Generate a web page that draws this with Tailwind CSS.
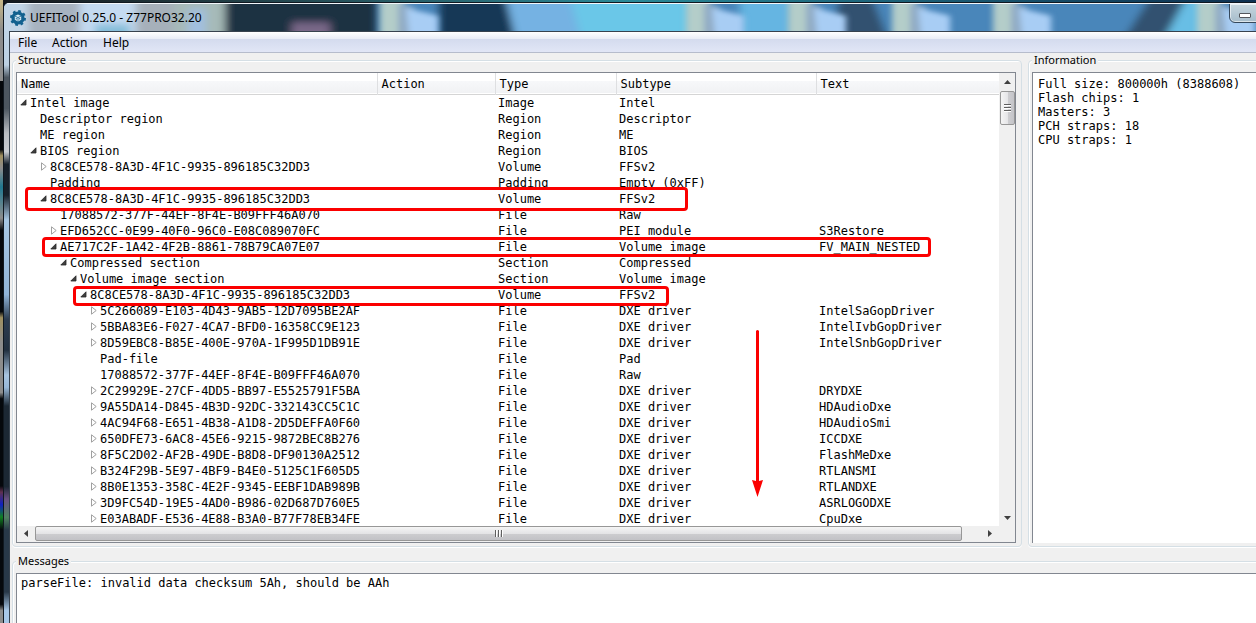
<!DOCTYPE html>
<html lang="en">
<head>
<meta charset="utf-8">
<title>UEFITool 0.25.0 - Z77PRO32.20</title>
<script src="https://cdn.jsdelivr.net/npm/@tailwindcss/browser@4"></script>
</head>
<body class="relative h-screen overflow-hidden bg-[#0c1016] pl-[3px] pt-[2px] font-['Noto_Sans','Open_Sans',sans-serif] text-xs text-black">

<!-- desktop behind the window -->
<div class="absolute inset-x-0 top-0 h-[3px] bg-linear-to-r from-[#15181c] via-[#2a8a98] to-[#0e3050]" aria-hidden="true"></div>
<div class="absolute inset-y-0 left-0 w-[3px] bg-[linear-gradient(180deg,#c8b888_0%,#8c8c8c_5%,#8c8c8c_13%,#05080c_13%,#05080c_24%,#a09060_25%,#8c8c8c_27%,#207890_30%,#8c8c8c_35%,#05080c_37%,#05080c_50%,#a09060_51%,#8c8c8c_55%,#8c8c8c_63%,#05080c_64%,#05080c_78%,#603050_79%,#1020c0_81%,#108020_83%,#05080c_85%,#05080c_97%,#8c8c8c_98%)]" aria-hidden="true"></div>

<div class="relative flex h-full flex-col overflow-hidden rounded-tl-md border-l border-t border-[#101820] bg-[linear-gradient(180deg,#c4d8ea_0%,#bcd0e2_10%,#4c5660_12%,#4c5660_17%,#b8bcc2_21%,#c8ccd2_24%,#16202a_26%,#16202a_31%,#a8c8e4_35%,#90b4d8_47%,#2c3c50_51%,#223040_56%,#a8c4e0_60%,#98b8d8_62%,#1c2834_65%,#1c2834_78%,#685080_80%,#508060_83%,#283848_85%,#283848_95%,#a8c8e8_98%)]">

  <header class="relative flex h-7 shrink-0 items-center overflow-hidden border-t border-white/80">
    <svg class="absolute inset-0 h-full w-full" viewBox="4 3 1252 28" preserveAspectRatio="none" aria-hidden="true">
      <defs>
        <filter id="soft" x="-5%" y="-50%" width="110%" height="200%"><feGaussianBlur stdDeviation="4"/></filter>
        <filter id="softer" x="-20%" y="-50%" width="140%" height="200%"><feGaussianBlur stdDeviation="3"/></filter>
        <g id="folder">
          <path d="M0 -8H24V44H0z" fill="#b4cdc9"/>
          <path d="M18 2L34 6V44H18z" fill="#90aac4"/>
          <path d="M26 7L58 15V44H30z" fill="#a8cdf4"/>
        </g>
      </defs>
      <g filter="url(#soft)">
        <path d="M-20 -10H1280V50H-20z" fill="#4a86ba"/>
        <path d="M-20 -10H30V50H-20z" fill="#c2d5e7"/>
        <path d="M28 -10H84V50H28z" fill="#a7b3c0"/>
        <path d="M80 -10H140V50H80z" fill="#c4daf1"/>
        <path d="M95 24H130V40H95z" fill="#84bdd9"/>
        <path d="M136 -10H178V50H136z" fill="#a6b0ba"/>
        <path d="M174 -10H226V50H174z" fill="#a6bab8"/>
        <path d="M188 8H206V40H188z" fill="#a1bfdf"/>
        <path d="M225 -10H378V50H225z" fill="#1d3043"/>
        <path d="M292 22H330V45H292z" fill="#796788"/>
        <path d="M438 -10H505L519 50H438z" fill="#193856"/>
        <path d="M504 -10H568L584 50H518z" fill="#75b2e3"/>
        <path d="M568 -10H692V50H584z" fill="#6ac7e8"/>
        <path d="M740 -10H792V50H740z" fill="#65b5e2"/>
        <path d="M840 -10H870L892 50H830z" fill="#31516f"/>
        <path d="M1154 -10H1200L1163 50H1117z" fill="#31516f"/>
        <path d="M1190 -10H1208V50H1158z" fill="#68bee5"/>
      </g>
      <g filter="url(#softer)">
        <use href="#folder" x="380"/><use href="#folder" x="686"/><use href="#folder" x="788"/>
        <use href="#folder" x="892"/><use href="#folder" x="993"/><use href="#folder" x="1197"/>
      </g>
    </svg>
    <svg class="relative ml-1.5 size-4 shrink-0" viewBox="0 0 16 16" aria-hidden="true">
      <circle cx="8" cy="8" r="6.600" fill="#12618f"/>
      <circle cx="8" cy="8" r="7" fill="none" stroke="#12618f" stroke-width="2" stroke-dasharray="2.75 2.75"/>
      <path d="M8 4.400L11.200 6V9.800L8 11.600L4.800 9.800V6z" fill="#d9ebf5"/>
      <path d="M4.800 6L8 7.600L11.200 6M8 7.600V11.600" fill="none" stroke="#12618f" stroke-width=".8"/>
      <path d="M6.300 8V9.400M9.700 8V9.400" stroke="#12618f" stroke-width=".9"/>
    </svg>
    <h1 class="relative ml-1 whitespace-nowrap">UEFITool 0.25.0 - Z77PRO32.20</h1>
    <button class="absolute -right-1 -top-px flex h-5 w-[31px] items-center justify-center rounded-bl-md border border-[#35485c] bg-linear-to-b from-[#c9d8df] to-[#a6bccb] pt-1 shadow-[inset_0_0_0_1px_rgba(255,255,255,0.6)]" aria-label="Minimize">
      <span class="h-[5px] w-3 rounded-[1px] border border-[#53565c] bg-white"></span>
    </button>
  </header>

  <div class="ml-[5px] flex min-h-0 flex-1 flex-col border-l border-t border-[#37424e] bg-[#f0f0f0]">
    <nav class="flex h-[21px] shrink-0 items-center border-b border-[#b6bccc] bg-[linear-gradient(180deg,#ffffff_0%,#e8ecf6_35%,#d4dbee_36%,#e1e6f6_100%)] pl-2 pt-0.5">
      <button class="w-[34px] text-left">File</button>
      <button class="w-[51px] text-left">Action</button>
      <button class="text-left">Help</button>
    </nav>

    <div class="flex min-h-0 flex-1 gap-[6px] pl-0.5">
      <section class="relative flex min-w-0 flex-1 flex-col pr-[6px] pl-1 pb-1" aria-labelledby="structure">
        <div class="absolute inset-x-0 top-[7px] bottom-0 rounded border border-[#d5dfe5] shadow-[inset_1px_1px_0_white,0_1px_0_white]"></div>
        <h2 id="structure" class="relative h-[19px] w-fit bg-[#f0f0f0] px-0.5 text-[11px] leading-[14px]">Structure</h2>

        <div class="relative flex min-h-0 flex-1 flex-col border border-[#828790] bg-white">
          <div class="flex min-h-0 flex-1">
            <div class="min-w-0 flex-1 overflow-hidden">
              <table class="w-full table-fixed border-collapse whitespace-pre text-left font-['DejaVu_Sans_Mono',monospace] text-xs leading-4">
                <thead>
                  <tr class="h-[21px] border-b border-[#d5d5d5] bg-[linear-gradient(180deg,#ffffff_0%,#ffffff_40%,#f7f8fa_41%,#f1f2f4_100%)]">
                    <th class="w-[360px] border-r border-[#dedfe1] px-1 pt-0.5 pb-0 font-normal">Name</th>
                    <th class="w-[118px] border-r border-[#dedfe1] px-1 pt-0.5 pb-0 font-normal">Action</th>
                    <th class="w-[121px] border-r border-[#dedfe1] px-1 pt-0.5 pb-0 font-normal">Type</th>
                    <th class="w-[200px] border-r border-[#dedfe1] px-1 pt-0.5 pb-0 font-normal">Subtype</th>
                    <th class="px-1 pt-0.5 pb-0 font-normal">Text</th>
                  </tr>
                </thead>
                <tbody id="tree"></tbody>
              </table>
            </div>
            <div class="flex w-4 shrink-0 flex-col items-center bg-[#f0f0f0]">
              <button class="flex h-[18px] w-full items-center justify-center" aria-label="Scroll up"><svg class="h-1 w-[7px]" viewBox="0 0 7 4"><path d="M0 4L3.5 0L7 4z" fill="#404040"/></svg></button>
              <div class="flex h-[34px] w-[15px] flex-col items-center justify-center gap-px rounded-[2px] border border-[#979797] bg-[linear-gradient(90deg,#f5f5f5,#e6e6e8_50%,#cfcfd2_51%,#c4c4c8)]">
                <span class="h-0.5 w-[7px] border-b border-white bg-[#606060]"></span><span class="h-0.5 w-[7px] border-b border-white bg-[#606060]"></span><span class="h-0.5 w-[7px] border-b border-white bg-[#606060]"></span>
              </div>
              <button class="mt-auto flex h-[17px] w-full items-center justify-center" aria-label="Scroll down"><svg class="h-1 w-[7px]" viewBox="0 0 7 4"><path d="M0 0H7L3.5 4z" fill="#404040"/></svg></button>
            </div>
          </div>
          <div class="flex h-4 shrink-0 items-start bg-[#f0f0f0]">
            <button class="flex h-[15px] w-[18px] items-center justify-center" aria-label="Scroll left"><svg class="h-[7px] w-1" viewBox="0 0 4 7"><path d="M4 0V7L0 3.5z" fill="#404040"/></svg></button>
            <div class="flex h-[15px] flex-1 items-center justify-center gap-px rounded-[2px] border border-[#979797] bg-[linear-gradient(180deg,#f5f5f5,#e4e4e6_50%,#cdcdd0_51%,#c2c2c6)]">
              <span class="h-[7px] w-0.5 border-r border-white bg-[#606060]"></span><span class="h-[7px] w-0.5 border-r border-white bg-[#606060]"></span><span class="h-[7px] w-0.5 border-r border-white bg-[#606060]"></span>
            </div>
            <button class="ml-[19px] flex h-[15px] w-[17px] items-center justify-center" aria-label="Scroll right"><svg class="h-[7px] w-1" viewBox="0 0 4 7"><path d="M0 0V7L4 3.5z" fill="#404040"/></svg></button>
            <span class="w-[17px]"></span>
          </div>

          <!-- markup drawn over the tree -->
          <div class="absolute left-2 top-[114px] h-6 w-[663px] rounded border-3 border-[#fb0000]"></div>
          <div class="absolute left-[25px] top-[164px] h-5 w-[889px] rounded border-3 border-[#fb0000]"></div>
          <div class="absolute left-14 top-[213px] h-5 w-[596px] rounded border-3 border-[#fb0000]"></div>
          <svg class="absolute left-[735px] top-[257px] h-[167px] w-[11px]" viewBox="0 0 11 167" aria-hidden="true">
            <path d="M4 1Q5.500 -1 7 1V151L11 150L5.500 167L0 150L4 151z" fill="#fb0000"/>
          </svg>
        </div>
      </section>

      <section class="relative flex w-[228px] shrink-0 flex-col pb-1 pl-1" aria-labelledby="information">
        <div class="absolute -right-2 left-0 top-[7px] bottom-0 rounded border border-[#d5dfe5] shadow-[inset_1px_1px_0_white,0_1px_0_white]"></div>
        <h2 id="information" class="relative h-[19px] w-fit bg-[#f0f0f0] px-0.5 text-[11px] leading-[14px]">Information</h2>
        <div class="relative flex-1 whitespace-pre border-l border-t border-[#828790] bg-white py-1 pl-[5px] font-['DejaVu_Sans_Mono',monospace] text-xs leading-[14px]"><p>Full size: 800000h (8388608)</p><p>Flash chips: 1</p><p>Masters: 3</p><p>PCH straps: 18</p><p>CPU straps: 1</p></div>
      </section>
    </div>

    <section class="relative mt-[6px] flex h-[70px] shrink-0 flex-col pl-[6px]" aria-labelledby="messages">
      <div class="absolute -right-2 -bottom-2 left-0.5 top-[8px] rounded border border-[#d5dfe5] shadow-[inset_1px_1px_0_white]"></div>
      <h2 id="messages" class="relative h-5 w-fit bg-[#f0f0f0] px-0.5 text-[11px] leading-4">Messages</h2>
      <div class="relative flex-1 border-l border-t border-[#828790] bg-white px-1 pt-0.5 font-['DejaVu_Sans_Mono',monospace] text-xs leading-[14px]">parseFile: invalid data checksum 5Ah, should be AAh</div>
    </section>
  </div>
</div>

<script>
// [depth, state (o = open, c = closed, blank = leaf), name, type, subtype, text]
const rows = [
  [0, 'o', 'Intel image', 'Image', 'Intel', ''],
  [1, '', 'Descriptor region', 'Region', 'Descriptor', ''],
  [1, '', 'ME region', 'Region', 'ME', ''],
  [1, 'o', 'BIOS region', 'Region', 'BIOS', ''],
  [2, 'c', '8C8CE578-8A3D-4F1C-9935-896185C32DD3', 'Volume', 'FFSv2', ''],
  [2, '', 'Padding', 'Padding', 'Empty (0xFF)', ''],
  [2, 'o', '8C8CE578-8A3D-4F1C-9935-896185C32DD3', 'Volume', 'FFSv2', ''],
  [3, '', '17088572-377F-44EF-8F4E-B09FFF46A070', 'File', 'Raw', ''],
  [3, 'c', 'EFD652CC-0E99-40F0-96C0-E08C089070FC', 'File', 'PEI module', 'S3Restore'],
  [3, 'o', 'AE717C2F-1A42-4F2B-8861-78B79CA07E07', 'File', 'Volume image', 'FV_MAIN_NESTED'],
  [4, 'o', 'Compressed section', 'Section', 'Compressed', ''],
  [5, 'o', 'Volume image section', 'Section', 'Volume image', ''],
  [6, 'o', '8C8CE578-8A3D-4F1C-9935-896185C32DD3', 'Volume', 'FFSv2', ''],
  [7, 'c', '5C266089-E103-4D43-9AB5-12D7095BE2AF', 'File', 'DXE driver', 'IntelSaGopDriver'],
  [7, 'c', '5BBA83E6-F027-4CA7-BFD0-16358CC9E123', 'File', 'DXE driver', 'IntelIvbGopDriver'],
  [7, 'c', '8D59EBC8-B85E-400E-970A-1F995D1DB91E', 'File', 'DXE driver', 'IntelSnbGopDriver'],
  [7, '', 'Pad-file', 'File', 'Pad', ''],
  [7, '', '17088572-377F-44EF-8F4E-B09FFF46A070', 'File', 'Raw', ''],
  [7, 'c', '2C29929E-27CF-4DD5-BB97-E5525791F5BA', 'File', 'DXE driver', 'DRYDXE'],
  [7, 'c', '9A55DA14-D845-4B3D-92DC-332143CC5C1C', 'File', 'DXE driver', 'HDAudioDxe'],
  [7, 'c', '4AC94F68-E651-4B38-A1D8-2D5DEFFA0F60', 'File', 'DXE driver', 'HDAudioSmi'],
  [7, 'c', '650DFE73-6AC8-45E6-9215-9872BEC8B276', 'File', 'DXE driver', 'ICCDXE'],
  [7, 'c', '8F5C2D02-AF2B-49DE-B8D8-DF90130A2512', 'File', 'DXE driver', 'FlashMeDxe'],
  [7, 'c', 'B324F29B-5E97-4BF9-B4E0-5125C1F605D5', 'File', 'DXE driver', 'RTLANSMI'],
  [7, 'c', '8B0E1353-358C-4E2F-9345-EEBF1DAB989B', 'File', 'DXE driver', 'RTLANDXE'],
  [7, 'c', '3D9FC54D-19E5-4AD0-B986-02D687D760E5', 'File', 'DXE driver', 'ASRLOGODXE'],
  [7, 'c', 'E03ABADF-E536-4E88-B3A0-B77F78EB34FE', 'File', 'DXE driver', 'CpuDxe']
];
const marks = {
  o: '<svg class="size-[7px]" viewBox="0 0 7 7"><path d="M6 .8V6H.8z" fill="#404040" stroke="#262626" stroke-width=".8"/></svg>',
  c: '<svg class="ml-px h-[9px] w-[6px]" viewBox="0 0 6 9"><path d="M.5 .8V8.200L5.200 4.500z" fill="#fff" stroke="#a0a0a0"/></svg>',
  '': ''
};
document.getElementById('tree').innerHTML = rows.map(([d, s, name, type, sub, text]) =>
  `<tr class="h-4"><td class="p-0"><div class="flex items-center" style="padding-left:${3 + 10 * d}px"><span class="flex w-[10px] shrink-0 items-center">${marks[s]}</span>${name}</div></td><td class="p-0"></td><td class="p-0 pl-[3px]">${type}</td><td class="p-0 pl-[3px]">${sub}</td><td class="p-0 pl-[3px]">${text}</td></tr>`).join('');
</script>
</body>
</html>
